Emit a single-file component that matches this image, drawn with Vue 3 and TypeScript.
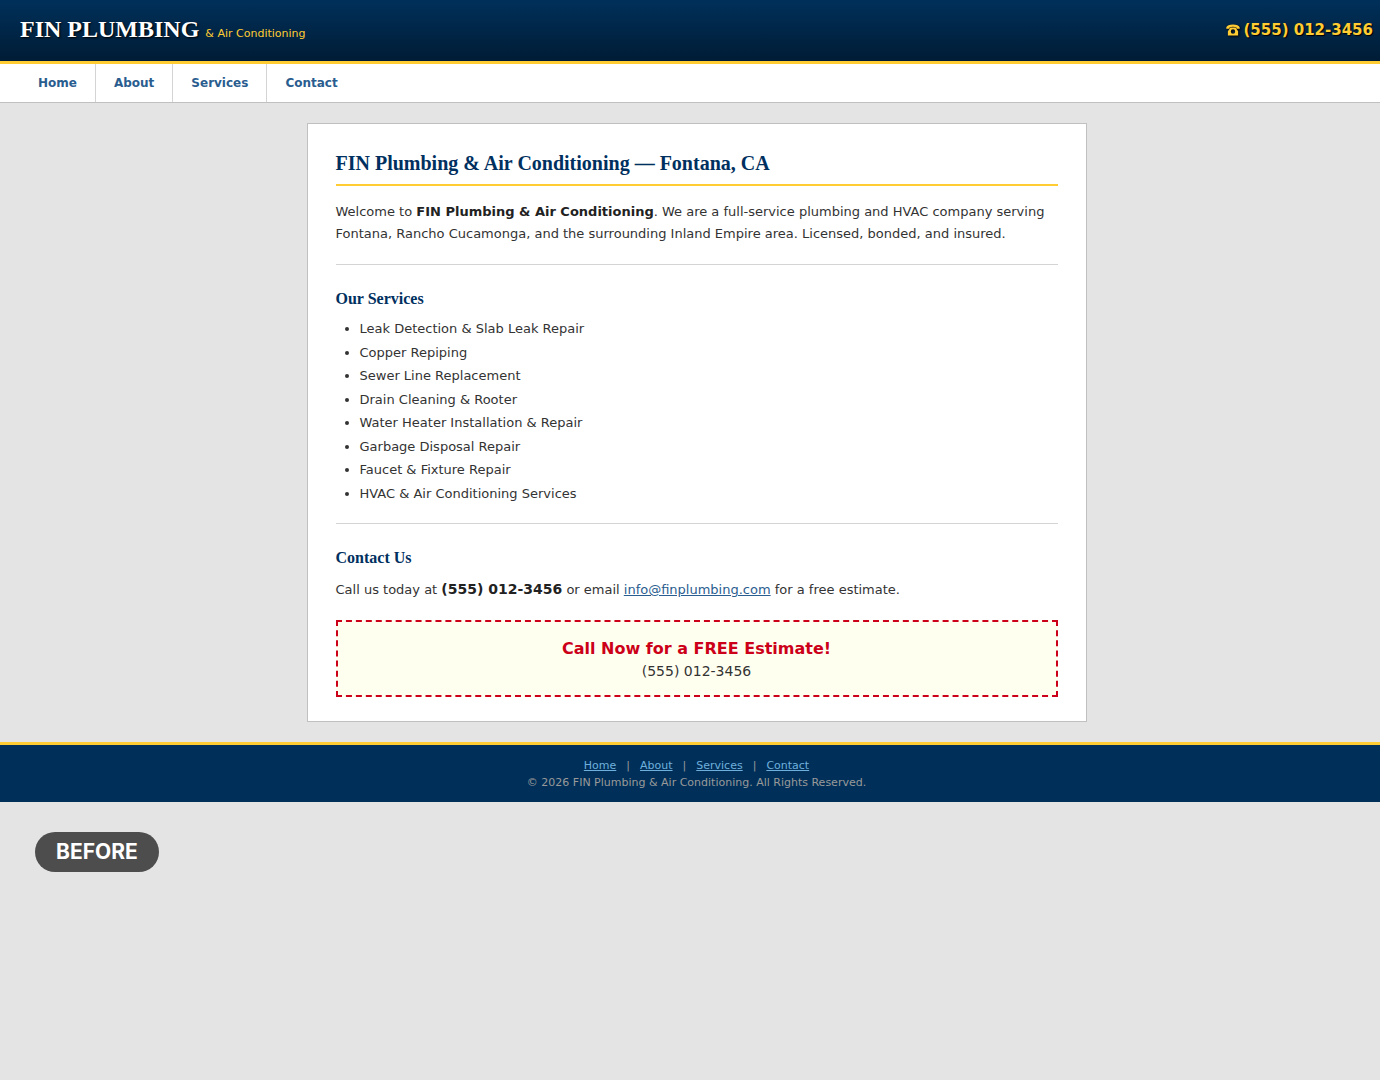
<script setup lang="ts">
interface NavLink {
  label: string
  href: string
}

const links: NavLink[] = [
  { label: 'Home', href: '#home' },
  { label: 'About', href: '#about' },
  { label: 'Services', href: '#services' },
  { label: 'Contact', href: '#contact' },
]

const services: string[] = [
  'Leak Detection & Slab Leak Repair',
  'Copper Repiping',
  'Sewer Line Replacement',
  'Drain Cleaning & Rooter',
  'Water Heater Installation & Repair',
  'Garbage Disposal Repair',
  'Faucet & Fixture Repair',
  'HVAC & Air Conditioning Services',
]

const phone = '(555) 012-3456'
const email = 'info@finplumbing.com'
</script>

<template>
  <div class="page">
    <header class="header">
      <div class="brand">
        <span class="name">FIN PLUMBING</span>
        <span class="tagline">&amp; Air Conditioning</span>
      </div>
      <div class="phone">
        <svg class="phone-icon" width="14" height="12" viewBox="0 0 14 12" aria-hidden="true">
          <path
            d="M.3 4.800V3.400C.7 1.500 3.600.5 7 .5s6.300 1 6.700 2.900v1.400h-3.200V3.400C9.700 3 8.500 2.800 7 2.800s-2.700.2-3.500.6v1.400z"
            fill="currentColor"
          />
          <path
            fill-rule="evenodd"
            d="M4.500 3.600h5l2.600 3.600v4.300H1.900V7.200zM7 5.300a2.200 2.200 0 1 0 0 4.400 2.200 2.200 0 0 0 0-4.400z"
            fill="currentColor"
          />
        </svg>
        <span>{{ phone }}</span>
      </div>
    </header>

    <nav class="nav">
      <a v-for="link in links" :key="link.href" :href="link.href">{{ link.label }}</a>
    </nav>

    <main class="main">
      <article class="card">
        <h1>FIN Plumbing &amp; Air Conditioning — Fontana, CA</h1>
        <p>
          Welcome to <strong>FIN Plumbing &amp; Air Conditioning</strong>. We are a full-service
          plumbing and HVAC company serving Fontana, Rancho Cucamonga, and the surrounding Inland
          Empire area. Licensed, bonded, and insured.
        </p>
        <hr />
        <h2>Our Services</h2>
        <ul>
          <li v-for="service in services" :key="service">{{ service }}</li>
        </ul>
        <hr />
        <h2>Contact Us</h2>
        <p>
          Call us today at <strong class="number">{{ phone }}</strong> or email
          <a :href="`mailto:${email}`">{{ email }}</a> for a free estimate.
        </p>
        <div class="callout">
          <strong>Call Now for a FREE Estimate!</strong>
          <span>{{ phone }}</span>
        </div>
      </article>
    </main>

    <footer class="footer">
      <div class="footer-links">
        <template v-for="(link, i) in links" :key="link.href">
          <span v-if="i > 0">|</span>
          <a :href="link.href">{{ link.label }}</a>
        </template>
      </div>
      <div>© 2026 FIN Plumbing &amp; Air Conditioning. All Rights Reserved.</div>
    </footer>

    <div class="badge">BEFORE</div>
  </div>
</template>

<style>
body {
  margin: 0;
  background: #e4e4e4;
}
</style>

<style scoped>
.page {
  font-family: Verdana, 'DejaVu Sans', sans-serif;
  font-size: 13px;
  color: #333;
}

.header {
  display: flex;
  align-items: center;
  justify-content: space-between;
  padding: 14px 7px 17px 20px;
  background: linear-gradient(#00305a, #001c35);
  border-bottom: 3px solid #ffcc33;
}

.brand {
  display: flex;
  align-items: baseline;
  gap: 6px;
}

.name {
  font: bold 24px/30px 'Liberation Serif', serif;
  color: #fff;
  text-shadow: 1px 1px 2px #000;
}

.tagline {
  font-size: 11px;
  color: #ffcc33;
}

.phone {
  display: flex;
  align-items: center;
  gap: 3px;
  padding-top: 2px;
  font-size: 15px;
  font-weight: bold;
  color: #ffcc33;
  text-shadow: 1px 1px 1px #000;
}

.phone-icon {
  filter: drop-shadow(1px 1px 1px #000);
}

.nav {
  display: flex;
  padding: 0 20px;
  background: #fff;
  border-bottom: 1px solid #c0c0c0;
}

.nav a {
  padding: 10px 18px;
  border-right: 1px solid #d4d4d4;
  font-size: 12px;
  font-weight: bold;
  line-height: 18px;
  color: #2a5d8f;
  text-decoration: none;
}

.nav a:last-child {
  border-right: 0;
}

.main {
  padding: 20px 0 20px 13px;
}

.card {
  box-sizing: border-box;
  max-width: 780px;
  margin: 0 auto;
  padding: 24px 28px;
  background: #fff;
  border: 1px solid #c0c0c0;
}

h1,
h2 {
  margin: 0;
  font-family: 'Liberation Serif', serif;
  color: #003060;
}

h1 {
  padding-bottom: 6px;
  border-bottom: 2px solid #ffcc33;
  font-size: 20px;
  line-height: 30px;
}

h2 {
  font-size: 16px;
  line-height: 24px;
}

p {
  margin: 0;
  line-height: 22px;
}

h1 + p {
  margin-top: 15px;
}

h2 + p {
  margin-top: 8px;
}

p strong {
  color: #222;
}

p .number {
  font-size: 14px;
}

p a {
  color: #2a5d8f;
}

hr {
  height: 1px;
  margin: 19px 0 22px;
  border: 0;
  background: #d4d4d4;
}

ul {
  margin: 8px 0 20px;
  padding-left: 24px;
}

li {
  margin-bottom: 4px;
  line-height: 1.5;
}

.callout {
  display: flex;
  flex-direction: column;
  align-items: center;
  margin-top: 19px;
  padding: 15px 14px 13px;
  border: 2px dashed #cc0018;
  background: #fffff0;
  font-size: 14px;
  line-height: 22px;
}

.callout strong {
  font-size: 16px;
  line-height: 23px;
  color: #cc0018;
}

.footer {
  padding: 12px 0 11px 13px;
  background: #003059;
  border-top: 3px solid #ffcc33;
  font-size: 11px;
  line-height: 17px;
  color: #999;
  text-align: center;
}

.footer-links {
  display: flex;
  justify-content: center;
  gap: 10px;
}

.footer a {
  color: #6fafdc;
}

.badge {
  width: fit-content;
  margin: 30px 0 0 35px;
  padding: 0 21px;
  border-radius: 20px;
  background: #4d4d4d;
  font: bold 21px/40px Inter, sans-serif;
  color: #fff;
}
</style>
